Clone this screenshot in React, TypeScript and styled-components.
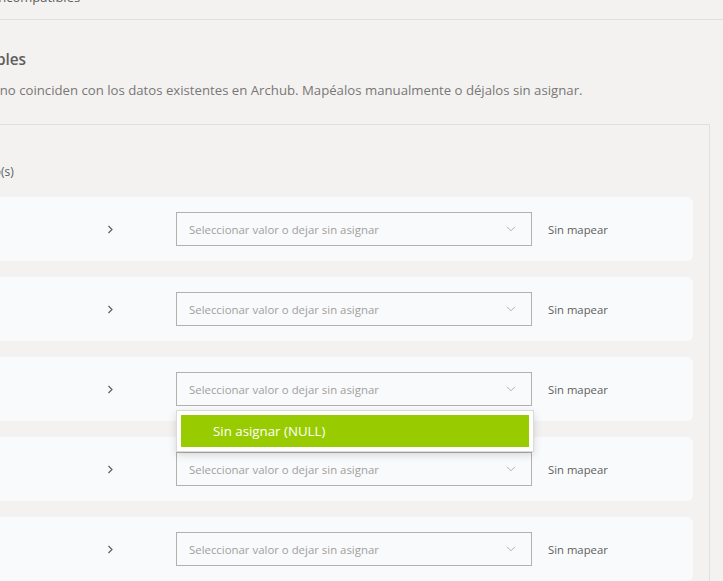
import React from "react";
import styled, { createGlobalStyle } from "styled-components";

const Global = createGlobalStyle`
  html, body { margin: 0; padding: 0; background: #f3f2f1; overflow: hidden; }
  body { font-family: "Open Sans", "Noto Sans", Arial, sans-serif; }
  #root { width: 723px; height: 581px; overflow: hidden; }
`;

const Page = styled.div`
  margin: -25px 0 0 -183px;
  width: 906px;
`;

const TabBar = styled.div`
  height: 44px;
  border-bottom: 1px solid #e1dfdd;
  display: flex;
  align-items: center;
  gap: 45px;
  padding-left: 24px;
`;

const Tab = styled.span`
  font-size: 13px;
  color: #605e5c;
`;

const Content = styled.div`
  padding: 29px 13px 0 24px;
`;

const Header = styled.header`
  padding-left: 21px;
`;

const Heading = styled.h2`
  margin: 0;
  font-size: 15.4px;
  line-height: 22px;
  font-weight: 600;
  color: #605e5c;
`;

const Description = styled.p`
  margin: 10px 0 25px;
  font-size: 13.2px;
  line-height: 18px;
  color: #797775;
`;

const Card = styled.section`
  border: 1px solid #e1dfdd;
  padding: 16px 16px 0 16px;
`;

const CardTitle = styled.div`
  font-size: 13px;
  line-height: 20px;
  font-weight: 600;
  color: #323130;
`;

const Count = styled.div`
  margin-top: 3px;
  font-size: 12px;
  line-height: 16px;
  color: #605e5c;
`;

const Rows = styled.div`
  margin-top: 17px;
  display: flex;
  flex-direction: column;
  gap: 16px;
`;

const Row = styled.div`
  height: 64px;
  box-sizing: border-box;
  padding: 0 16px;
  display: flex;
  align-items: center;
  background: #f9fafb;
  border-radius: 6px;
`;

const Label = styled.div`
  flex: 1;
  font-size: 13px;
  color: #323130;
`;

const Arrow = styled.div`
  flex: 0 0 24px;
  margin-right: 54px;
  display: flex;
  justify-content: center;
`;

const SelectBox = styled.div`
  position: relative;
  flex: 0 0 356px;
  height: 34px;
  box-sizing: border-box;
  border: 1px solid #b3b0ad;
  display: flex;
  align-items: center;
  justify-content: space-between;
  padding: 0 15px 0 12px;
`;

const Placeholder = styled.span`
  font-size: 11.4px;
  color: #a19f9d;
`;

const Status = styled.div`
  flex: 0 0 129px;
  margin-left: 16px;
  font-size: 11.3px;
  color: #605e5c;
`;

const Menu = styled.div`
  position: absolute;
  z-index: 10;
  top: 37px;
  left: -1px;
  width: 358px;
  box-sizing: border-box;
  padding: 4px;
  background: #ffffff;
  border: 1px solid #dcdad8;
  box-shadow: 0 3px 8px rgba(0, 0, 0, 0.14);
`;

const MenuItem = styled.div`
  height: 32px;
  display: flex;
  align-items: center;
  padding-left: 32px;
  background: #99cc00;
  color: #ffffff;
  font-size: 13.3px;
`;

const ChevronRight = () => (
  <svg width="7" height="9" viewBox="0 0 7 9">
    <path d="M1.5 1 L5 4.5 L1.5 8" fill="none" stroke="#605e5c" strokeWidth="1.2" />
  </svg>
);

const ChevronDown = () => (
  <svg width="10" height="6" viewBox="0 0 10 6">
    <path d="M1 0.8 L5 4.8 L9 0.8" fill="none" stroke="#b3b0ad" strokeWidth="1" />
  </svg>
);

const values = ["m2", "ml", "kg", "u", "gl", "m3"];

export default function App() {
  return (
    <>
      <Global />
      <Page>
        <TabBar>
          <Tab>Columnas</Tab>
          <Tab>Valores incompatibles</Tab>
        </TabBar>
        <Content>
          <Header>
            <Heading>Valores incompatibles</Heading>
            <Description>
              Los siguientes valores no coinciden con los datos existentes en Archub. Mapéalos manualmente o déjalos sin asignar.
            </Description>
          </Header>
          <Card>
            <CardTitle>Unidad</CardTitle>
            <Count>6 valor(es) no encontrado(s)</Count>
            <Rows>
              {values.map((v, i) => (
                <Row key={v}>
                  <Label>{v}</Label>
                  <Arrow>
                    <ChevronRight />
                  </Arrow>
                  <SelectBox>
                    <Placeholder>Seleccionar valor o dejar sin asignar</Placeholder>
                    <ChevronDown />
                    {i === 2 && (
                      <Menu>
                        <MenuItem>Sin asignar (NULL)</MenuItem>
                      </Menu>
                    )}
                  </SelectBox>
                  <Status>Sin mapear</Status>
                </Row>
              ))}
            </Rows>
          </Card>
        </Content>
      </Page>
    </>
  );
}
